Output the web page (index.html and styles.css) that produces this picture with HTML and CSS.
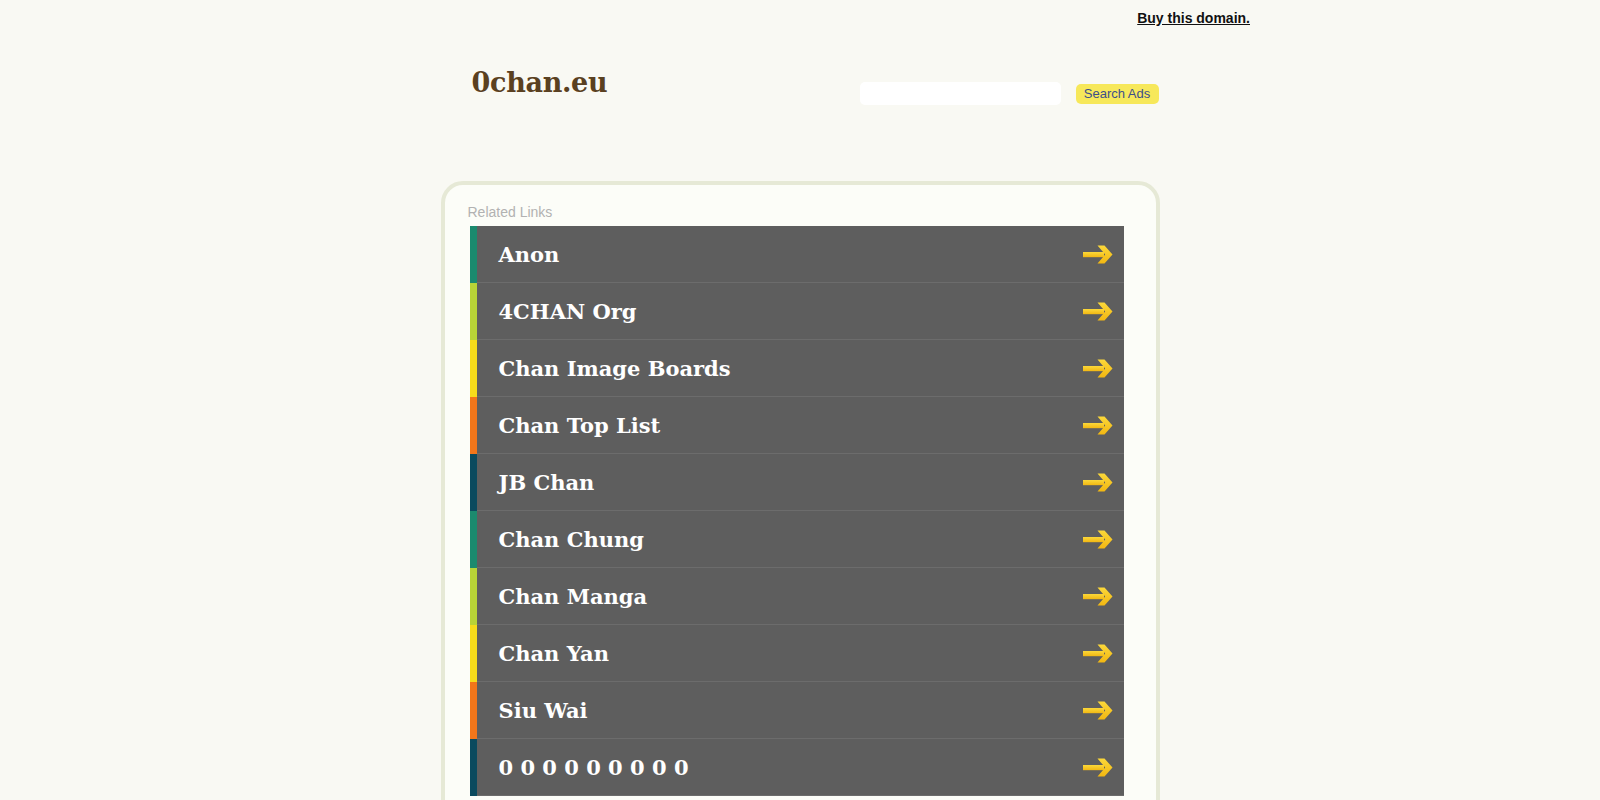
FILE: index.html
```html
<!DOCTYPE html>
<html lang="en">
<head>
<meta charset="utf-8">
<title>0chan.eu</title>
<link rel="stylesheet" href="styles.css">
</head>
<body>
<div class="topbar"><a class="buy" href="#">Buy this domain.</a></div>
<div class="header">
  <div class="logo">0chan.eu</div>
  <form class="search">
    <input class="search-input" type="text">
    <button class="search-btn" type="button">Search Ads</button>
  </form>
</div>
<div class="box">
  <div class="related">Related Links</div>
  <ul class="links">
    <li class="row"><span class="strip c1"></span><a class="item" href="#"><span class="title">Anon</span><svg class="arrow" viewBox="0 0 31 19" width="31" height="19"><use href="#arr"/></svg></a></li>
    <li class="row"><span class="strip c2"></span><a class="item" href="#"><span class="title">4CHAN Org</span><svg class="arrow" viewBox="0 0 31 19" width="31" height="19"><use href="#arr"/></svg></a></li>
    <li class="row"><span class="strip c3"></span><a class="item" href="#"><span class="title">Chan Image Boards</span><svg class="arrow" viewBox="0 0 31 19" width="31" height="19"><use href="#arr"/></svg></a></li>
    <li class="row"><span class="strip c4"></span><a class="item" href="#"><span class="title">Chan Top List</span><svg class="arrow" viewBox="0 0 31 19" width="31" height="19"><use href="#arr"/></svg></a></li>
    <li class="row"><span class="strip c5"></span><a class="item" href="#"><span class="title">JB Chan</span><svg class="arrow" viewBox="0 0 31 19" width="31" height="19"><use href="#arr"/></svg></a></li>
    <li class="row"><span class="strip c1"></span><a class="item" href="#"><span class="title">Chan Chung</span><svg class="arrow" viewBox="0 0 31 19" width="31" height="19"><use href="#arr"/></svg></a></li>
    <li class="row"><span class="strip c2"></span><a class="item" href="#"><span class="title">Chan Manga</span><svg class="arrow" viewBox="0 0 31 19" width="31" height="19"><use href="#arr"/></svg></a></li>
    <li class="row"><span class="strip c3"></span><a class="item" href="#"><span class="title">Chan Yan</span><svg class="arrow" viewBox="0 0 31 19" width="31" height="19"><use href="#arr"/></svg></a></li>
    <li class="row"><span class="strip c4"></span><a class="item" href="#"><span class="title">Siu Wai</span><svg class="arrow" viewBox="0 0 31 19" width="31" height="19"><use href="#arr"/></svg></a></li>
    <li class="row"><span class="strip c5"></span><a class="item" href="#"><span class="title">0 0 0 0 0 0 0 0 0</span><svg class="arrow" viewBox="0 0 31 19" width="31" height="19"><use href="#arr"/></svg></a></li>
  </ul>
</div>
<svg class="defs" width="0" height="0">
  <defs>
    <linearGradient id="ag" x1="0" y1="0" x2="0" y2="1">
      <stop offset="0" stop-color="#fbd83a"/>
      <stop offset="1" stop-color="#f2b712"/>
    </linearGradient>
    <g id="arr">
      <path d="M1 7 H22 V12.2 H1 Z" fill="url(#ag)"/>
      <path d="M15.5 0.5 H22.5 L30.5 9.6 L22.5 18.5 H15.5 L23.2 9.6 Z" fill="url(#ag)"/>
    </g>
  </defs>
</svg>
</body>
</html>
```
FILE: styles.css
```css
html, body {
  margin: 0;
  padding: 0;
}
body {
  background: #f9f9f3;
  font-family: "Liberation Sans", Arial, sans-serif;
  min-height: 800px;
}
.topbar {
  width: 900px;
  margin: 0 auto;
  padding-top: 10px;
  text-align: right;
  line-height: 16px;
}
.buy {
  font-size: 14px;
  font-weight: bold;
  color: #111;
  text-decoration: underline;
}
.header {
  width: 719px;
  margin: 0 auto;
  display: flex;
  justify-content: space-between;
  align-items: flex-start;
  padding-top: 37px;
  height: 117px;
  box-sizing: border-box;
}
.logo {
  font-family: "DejaVu Serif", "Liberation Serif", serif;
  font-weight: bold;
  font-size: 27px;
  line-height: 40px;
  color: #5a4020;
  padding-left: 31px;
  letter-spacing: -0.3px;
}
.search {
  display: flex;
  align-items: center;
  gap: 15px;
  margin: 0;
  padding-top: 19px;
  padding-right: 1px;
}
.search-input {
  width: 201px;
  height: 23px;
  box-sizing: border-box;
  border: none;
  border-radius: 5px;
  background: #fff;
  padding: 0 6px;
  margin: 0;
}
.search-btn {
  width: 83px;
  height: 20px;
  box-sizing: border-box;
  border: none;
  border-radius: 5px;
  background: #f7e85a;
  color: #3d4f8a;
  font-family: "Liberation Sans", Arial, sans-serif;
  font-size: 13px;
  padding: 0;
  margin: 0;
  line-height: 20px;
}
.box {
  width: 719px;
  margin: 38px auto 0;
  box-sizing: border-box;
  border: 4px solid #e6e9d6;
  border-radius: 22px;
  background: #fcfdf8;
  padding: 18px 32px 30px 23px;
}
.related {
  font-size: 14px;
  line-height: 18px;
  color: #b2b2b2;
  margin-bottom: 5px;
}
.links {
  list-style: none;
  margin: 0 0 0 2px;
  padding: 0;
  width: 654px;
}
.row {
  display: flex;
  height: 57px;
}
.strip {
  width: 7px;
  flex: none;
}
.c1 { background: #1b8a6e; }
.c2 { background: #b8d437; }
.c3 { background: #f6dc1b; }
.c4 { background: #f2761a; }
.c5 { background: #0b4a5e; }
.item {
  flex: 1;
  display: flex;
  align-items: center;
  justify-content: space-between;
  background: #5e5e5e;
  border-bottom: 1px solid #6c6c6c;
  padding: 0 11px 0 22px;
  text-decoration: none;
}
.title {
  font-family: "DejaVu Serif", "Liberation Serif", serif;
  font-weight: bold;
  font-size: 21px;
  color: #fff;
  letter-spacing: 0;
}
.arrow {
  display: block;
  flex: none;
}
.defs {
  position: absolute;
  width: 0;
  height: 0;
}
```
